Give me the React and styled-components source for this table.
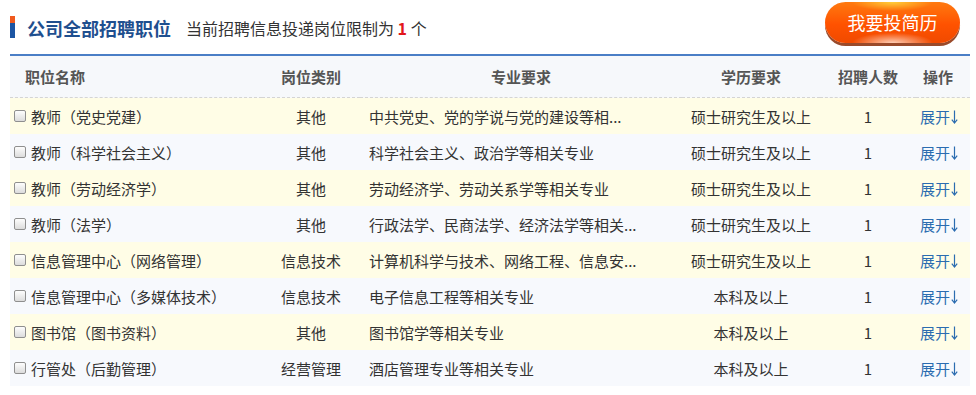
import React from "react";
import styled, { createGlobalStyle } from "styled-components";

const GlobalStyle = createGlobalStyle`
    body {
        margin: 0;
        background: #fff;
        font-family: "Noto Sans CJK SC", "Liberation Sans", sans-serif;
    }
`;

const jobs = [
    { name: "教师（党史党建）", type: "其他", major: "中共党史、党的学说与党的建设等相...", edu: "硕士研究生及以上", count: 1 },
    { name: "教师（科学社会主义）", type: "其他", major: "科学社会主义、政治学等相关专业", edu: "硕士研究生及以上", count: 1 },
    { name: "教师（劳动经济学）", type: "其他", major: "劳动经济学、劳动关系学等相关专业", edu: "硕士研究生及以上", count: 1 },
    { name: "教师（法学）", type: "其他", major: "行政法学、民商法学、经济法学等相关...", edu: "硕士研究生及以上", count: 1 },
    { name: "信息管理中心（网络管理）", type: "信息技术", major: "计算机科学与技术、网络工程、信息安...", edu: "硕士研究生及以上", count: 1 },
    { name: "信息管理中心（多媒体技术）", type: "信息技术", major: "电子信息工程等相关专业", edu: "本科及以上", count: 1 },
    { name: "图书馆（图书资料）", type: "其他", major: "图书馆学等相关专业", edu: "本科及以上", count: 1 },
    { name: "行管处（后勤管理）", type: "经营管理", major: "酒店管理专业等相关专业", edu: "本科及以上", count: 1 },
];

function DownArrow() {
    return (
        <ArrowIcon width="7" height="14" viewBox="0 0 7 14">
            <path d="M3.5 0.5V13M0.8 9.6L3.5 13L6.2 9.6" fill="none" stroke="currentColor" strokeWidth="1.2" />
        </ArrowIcon>
    );
}

function App() {
    return (
        <Wrapper>
            <GlobalStyle />
            <TopBar>
                <Title>公司全部招聘职位</Title>
                <Limit>
                    当前招聘信息投递岗位限制为 <strong>1</strong> 个
                </Limit>
                <ApplyButton>我要投简历</ApplyButton>
            </TopBar>
            <Table>
                <HeadRow>
                    <Cell align="left" pad="15px">职位名称</Cell>
                    <Cell>岗位类别</Cell>
                    <Cell>专业要求</Cell>
                    <Cell>学历要求</Cell>
                    <Cell>招聘人数</Cell>
                    <Cell pr="10px">操作</Cell>
                </HeadRow>
                {jobs.map((job, i) => (
                    <Row key={i} odd={i % 2 === 0}>
                        <Cell align="left" pad="4px">
                            <Check />
                            {job.name}
                        </Cell>
                        <Cell>{job.type}</Cell>
                        <Cell align="left" pad="9px">{job.major}</Cell>
                        <Cell>{job.edu}</Cell>
                        <Cell>{job.count}</Cell>
                        <Cell pr="8px">
                            <Expand href="#">
                                展开
                                <DownArrow />
                            </Expand>
                        </Cell>
                    </Row>
                ))}
            </Table>
        </Wrapper>
    );
}

const Wrapper = styled.div`
    width: 960px;
    margin-left: 10px;
`;

const TopBar = styled.div`
    display: flex;
    align-items: center;
    height: 54px;
    border-bottom: 2px solid #4a7ec6;
`;

const Title = styled.h2`
    margin: 0;
    padding-left: 17px;
    position: relative;
    font-size: 18px;
    font-weight: bold;
    color: #1f4f8f;
    top: 1px;

    &::before {
        content: "";
        position: absolute;
        left: 0;
        top: 1px;
        width: 5px;
        height: 22px;
        background: linear-gradient(#f05a1e 0 32%, #1c55a3 32% 100%);
    }
`;

const Limit = styled.span`
    margin-left: 15px;
    font-size: 16px;
    color: #333;
    position: relative;
    top: 1px;

    strong {
        color: #e2161b;
        font-weight: bold;
    }
`;

const ApplyButton = styled.button`
    margin-left: auto;
    margin-right: 10px;
    margin-bottom: 10px;
    width: 135px;
    height: 41px;
    border: none;
    border-radius: 21px;
    color: #fff;
    font-family: "Noto Sans CJK SC", sans-serif;
    font-size: 18px;
    cursor: pointer;
    background:
        radial-gradient(ellipse 30% 22% at 50% 0%, rgba(255, 210, 60, 0.95), rgba(255, 210, 60, 0) 100%),
        radial-gradient(ellipse 30% 25% at 50% 100%, rgba(255, 220, 200, 0.9), rgba(255, 220, 200, 0) 100%),
        linear-gradient(#ff7a10, #ff5200 55%, #f04a00);
    box-shadow: 0 3px 0 #9a4a2a;
`;

const Table = styled.div`
    display: grid;
    grid-template-columns: 252px 98px 322px 138px 96px 54px;
`;

const Row = styled.div`
    display: contents;

    & > div {
        height: 36px;
        background: ${(p) => (p.odd ? "#fffde6" : "#f7f9fd")};
        color: #333;
    }
`;

const HeadRow = styled.div`
    display: contents;

    & > div {
        height: 41px;
        background: #f6f8fb;
        color: #555;
        font-weight: bold;
        border-bottom: 1px dashed #d4d4d4;
    }
`;

const Cell = styled.div`
    display: flex;
    align-items: center;
    justify-content: ${(p) => (p.align === "left" ? "flex-start" : "center")};
    padding-left: ${(p) => p.pad || "0"};
    padding-right: ${(p) => p.pr || "0"};
    font-size: 15px;
    white-space: nowrap;
    overflow: hidden;
`;

const Check = styled.span`
    display: inline-block;
    width: 10px;
    height: 10px;
    margin-right: 5px;
    border: 1px solid #8f8f8f;
    border-radius: 2px;
    background: linear-gradient(#fdfdfd, #dcdcdc);
`;

const Expand = styled.a`
    display: inline-flex;
    align-items: center;
    color: #2b6cb0;
    text-decoration: none;
`;

const ArrowIcon = styled.svg`
    margin-left: 1px;
    margin-top: 1px;
`;

export default App;
